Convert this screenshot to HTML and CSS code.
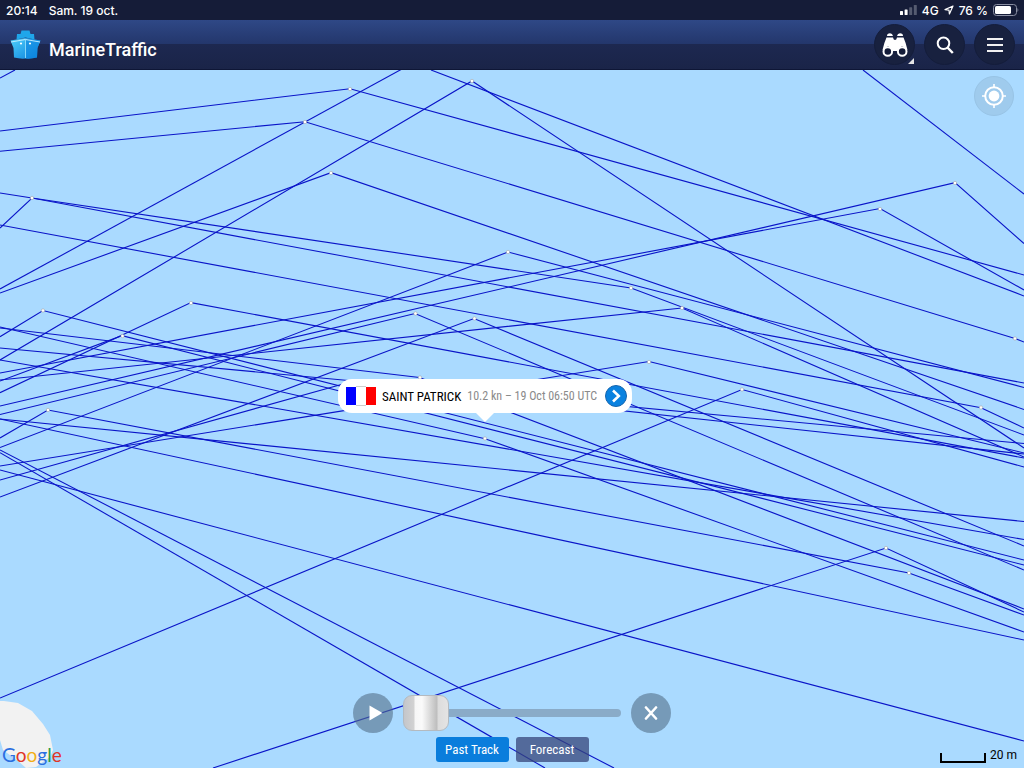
FILE: index.html
```html
<!DOCTYPE html>
<html lang="fr">
  <head>
    <meta charset="UTF-8" />
    <meta name="viewport" content="width=device-width, initial-scale=1.0" />
    <title>MarineTraffic</title>
    <link rel="stylesheet" href="styles.css">
  </head>
  <body>
    <div class="status-bar">
      <span>20:14</span>
      <span>Sam. 19 oct.</span>
      <div class="status-right">
        <svg width="17" height="10" viewBox="0 0 17 10">
          <rect x="0" y="6" width="3" height="4" rx="0.6" fill="#fff" />
          <rect x="4.6" y="4.5" width="3" height="5.5" rx="0.6" fill="#fff" />
          <rect x="9.2" y="2.3" width="3" height="7.7" rx="0.6" fill="#555b70" />
          <rect x="13.8" y="0" width="3" height="10" rx="0.6" fill="#555b70" />
        </svg>
        <span>4G</span>
        <svg width="10" height="10" viewBox="0 0 10 10">
          <path d="M9 1 L1 4.6 L5 5.2 L5.4 9 Z" fill="none" stroke="#fff" stroke-width="1.2" stroke-linejoin="round" />
        </svg>
        <span>76 %</span>
        <svg width="26" height="12" viewBox="0 0 26 12">
          <rect x="0.5" y="0.5" width="23" height="11" rx="3" fill="none" stroke="#8a8fa3" />
          <rect x="2" y="2" width="16" height="8" rx="1.6" fill="#fff" />
          <path d="M24.500 4 q1.600 2 0 4 z" fill="#8a8fa3" />
        </svg>
      </div>
    </div>

    <header class="header">
      <a class="brand" href="#">
        <svg width="32" height="30" viewBox="0 0 32 30">
          <defs>
            <linearGradient id="hull" x1="0" y1="0" x2="1" y2="1">
              <stop offset="0" stop-color="#4fd0fa" />
              <stop offset="1" stop-color="#0a7fdc" />
            </linearGradient>
          </defs>
          <path d="M12.500 0.500 H20.500 L21.500 4 H25 L25.500 9.500 L16.500 7.500 L7.500 9.500 L8 4 H11.500 Z" fill="#1fa6ea" />
          <path d="M1.500 10.500 L16.500 8 L31.500 10.500 L28.500 18 L28 27.500 Q22 29 16.500 28.500 Q11 29 5 27.500 L4.500 18 Z" fill="url(#hull)" />
          <path d="M16.500 8 L31.500 10.500 L28.500 18 L28 27.500 Q22 29 16.500 28.500 Z" fill="#0c86df" opacity="0.6" />
          <path d="M2 12 L16.500 9.500 L31 12" fill="none" stroke="#c8f1ff" stroke-width="0.9" />
          <path d="M16.500 10 V28" stroke="#9fe6fc" stroke-width="0.8" />
          <circle cx="12" cy="13.500" r="1.100" fill="#fff" />
          <circle cx="21" cy="13.500" r="1.100" fill="#fff" />
        </svg>
        <span>MarineTraffic</span>
      </a>
      <nav class="nav">
        <button class="round has-more" aria-label="Vessels">
          <svg width="26" height="24" viewBox="0 0 26 24" fill="#fff">
            <path d="M5 3 Q5 0.300 8 0.300 Q10.500 0.300 11 3 Z M15 3 Q15.500 0.300 18 0.300 Q21 0.300 21 3 Z" />
            <path d="M4.500 4.500 H11 Q11.500 7 13 7 Q14.500 7 15 4.500 H21.500 Q24 10 25.500 17 L20 13 L16 17 H10 L6 13 L0.500 17 Q2 10 4.500 4.500 Z" />
            <path d="M10 12 H16 V18 H10 Z" />
            <circle cx="5.800" cy="18.500" r="4.300" fill="#141c38" stroke="#fff" stroke-width="2" />
            <circle cx="20.200" cy="18.500" r="4.300" fill="#141c38" stroke="#fff" stroke-width="2" />
          </svg>
        </button>
        <button class="round" aria-label="Search">
          <svg width="18" height="18" viewBox="0 0 18 18" fill="none" stroke="#fff" stroke-width="2">
            <circle cx="7.500" cy="7.300" r="5.800" />
            <path d="M11.500 11.500 L16.800 17" stroke-width="2.500" />
          </svg>
        </button>
        <button class="round" aria-label="Menu">
          <svg width="16" height="14" viewBox="0 0 16 14" fill="#f1f1f1">
            <rect y="0" width="16" height="2" />
            <rect y="6" width="16" height="2" />
            <rect y="12" width="16" height="2" />
          </svg>
        </button>
      </nav>
    </header>

    <main class="map">
      <svg class="tracks" viewBox="0 70 1024 698" preserveAspectRatio="xMidYMid slice">
        <path class="land" d="M0 701 H4 L18 703 L32 711 L43 724 L50 735 L53 750 L50 757 L36 767 L26 768 L18 761 L3 750 L0 740 Z" />
        <g class="lines">
          <path d="M0 78 L15 70" />
          <path d="M0 131 L350 88.700 L1024 275" />
          <path d="M0 151.300 L305 121.700 L1015 338.500 L1024 342" />
          <path d="M0 289 L402 69" />
          <path d="M431 70 L1024 296" />
          <path d="M863 70 L1024 194" />
          <path d="M0 360 L472 81 L1024 448" />
          <path d="M0 293 L331 172.700 L1024 409.500" />
          <path d="M0 193 L32 198 L631 288 L1024 435" />
          <path d="M0 228 L32 198 L340 255.500 L1024 383" />
          <path d="M0 225 L981 407.700 L1024 428" />
          <path d="M0 447.500 L508 252 L1024 387.500" />
          <path d="M0 373 L880 208.500 L1024 290" />
          <path d="M0 406 L955 182.700 L1024 243.500" />
          <path d="M0 414.500 L415 313.500 L1024 570" />
          <path d="M0 497 L474 318.500 L1024 546" />
          <path d="M0 380 L682 308 L1024 457" />
          <path d="M0 336.700 L43 310.500 L1024 560" />
          <path d="M0 392.700 L191 302.600 L1024 458" />
          <path d="M0 381 L122 335.700 L1024 565" />
          <path d="M0 328 L419.500 377.500 L1024 609" />
          <path d="M0 327 L485 438.700 L1024 632" />
          <path d="M0 348 L1024 443.500" />
          <path d="M0 360 L1024 539.500" />
          <path d="M0 466 L649 361.500 L1024 453" />
          <path d="M0 480 L352 381.500 L1024 454" />
          <path d="M0 438 L48 410 L909 573 L1024 615" />
          <path d="M0 419 L1024 521.500" />
          <path d="M0 419 L1024 640" />
          <path d="M0 470 L1024 741" />
          <path d="M0 452.700 L545 768" />
          <path d="M0 450 L614 768" />
          <path d="M0 698 L742 389.500 L1024 467" />
          <path d="M213 768 L886 548 L1024 612" />
        </g>
        <g class="points">
          <circle cx="350" cy="89" r="1.700" />
          <circle cx="305" cy="122" r="1.700" />
          <circle cx="472" cy="81" r="1.700" />
          <circle cx="331" cy="173" r="1.700" />
          <circle cx="32" cy="198" r="1.700" />
          <circle cx="508" cy="252" r="1.700" />
          <circle cx="631" cy="288" r="1.700" />
          <circle cx="880" cy="209" r="1.700" />
          <circle cx="955" cy="183" r="1.700" />
          <circle cx="1015" cy="338.500" r="1.700" />
          <circle cx="43" cy="310.500" r="1.700" />
          <circle cx="191" cy="303" r="1.700" />
          <circle cx="122.500" cy="336" r="1.700" />
          <circle cx="48" cy="410" r="1.700" />
          <circle cx="415.500" cy="313.500" r="1.700" />
          <circle cx="474.500" cy="318.500" r="1.700" />
          <circle cx="682" cy="308" r="1.700" />
          <circle cx="420" cy="377.500" r="1.700" />
          <circle cx="649" cy="362" r="1.700" />
          <circle cx="742" cy="389.500" r="1.700" />
          <circle cx="981" cy="407.500" r="1.700" />
          <circle cx="485" cy="438.500" r="1.700" />
          <circle cx="886" cy="548" r="1.700" />
          <circle cx="909" cy="573" r="1.700" />
        </g>
      </svg>

      <button class="locate" aria-label="My location">
        <svg width="24" height="24" viewBox="0 0 24 24">
          <circle cx="12" cy="12" r="8.800" fill="none" stroke="#fff" stroke-width="2" />
          <circle cx="12" cy="12" r="5.400" fill="#fff" />
          <path d="M12 0 V4 M12 20 V24 M0 12 H4 M20 12 H24" stroke="#fff" stroke-width="1.600" />
        </svg>
      </button>

      <div class="callout">
        <svg class="flag" width="30" height="20" viewBox="0 0 30 20">
          <rect width="30" height="20" fill="#fff" />
          <rect y="1" width="10" height="18" fill="#00f" />
          <rect x="20" y="1" width="10" height="18" fill="#f00" />
          <path d="M10 0.500 H20 M10 19.500 H20" stroke="#ccc" />
        </svg>
        <span class="ship">SAINT PATRICK</span>
        <span class="info">10.2 kn – 19 Oct 06:50 UTC</span>
        <button class="go" aria-label="Details">
          <svg width="12" height="14" viewBox="0 0 12 14" fill="none" stroke="#fff" stroke-width="2.600">
            <path d="M3 1.500 L8.800 7 L3 12.500" />
          </svg>
        </button>
      </div>

      <div class="playback">
        <div class="timeline">
          <button class="control" aria-label="Play">
            <svg class="play" width="14" height="16" viewBox="0 0 14 16"><path d="M0.500 0.500 L13.500 8 L0.500 15.500 Z" fill="#fff" /></svg>
          </button>
          <input class="slider" type="range" min="0" max="100" value="0" aria-label="Time" />
          <button class="control" aria-label="Close">
            <svg width="14" height="14" viewBox="0 0 14 14"><path d="M2 1.500 L12 12.500 M12 1.500 L2 12.500" stroke="#fff" stroke-width="2.600" stroke-linecap="round" /></svg>
          </button>
        </div>
        <div class="tabs">
          <button class="tab active">Past Track</button>
          <button class="tab">Forecast</button>
        </div>
      </div>

      <a class="google" href="#"><span class="blue">G</span><span class="red">o</span><span class="yellow">o</span><span class="blue">g</span><span class="green">l</span><span class="red">e</span></a>

      <div class="scale">
        <div class="scale-bar"></div>
        <span>20 m</span>
      </div>
    </main>
  </body>
</html>
```
FILE: styles.css
```css
* {
  box-sizing: border-box;
}
body {
  display: flex;
  flex-direction: column;
  min-height: 100vh;
  margin: 0;
  background-color: #aadaff;
  font-family: Roboto, "Liberation Sans", sans-serif;
}
button {
  display: flex;
  align-items: center;
  justify-content: center;
  padding: 0;
  border: none;
  font-family: inherit;
  cursor: pointer;
}
a {
  text-decoration: none;
}
svg {
  flex: none;
}
.status-bar {
  display: flex;
  align-items: center;
  gap: 11px;
  height: 20px;
  padding: 0 5px 0 6px;
  background-color: #151c38;
  color: #fff;
  font-family: Inter, sans-serif;
  font-size: 12px;
  font-weight: 500;
}
.status-right {
  display: flex;
  align-items: center;
  gap: 5px;
  margin-left: auto;
}
.header {
  display: flex;
  align-items: center;
  justify-content: space-between;
  height: 50px;
  padding: 0 9px;
  background: linear-gradient(#2f4886, #23366b 50%, #1d2850 50%, #1a2448);
  border-bottom: 1px solid #0e1636;
}
.brand {
  display: flex;
  align-items: center;
  gap: 8px;
  color: #fff;
  font-size: 18px;
  font-weight: 500;
}
.brand span {
  padding-top: 10px;
}
.nav {
  display: flex;
  gap: 9px;
}
.round {
  position: relative;
  width: 41px;
  height: 41px;
  border: 1px solid #141d3b;
  border-radius: 50%;
  background-color: #18213f;
}
.has-more::after {
  content: "";
  position: absolute;
  right: 0;
  bottom: 0;
  border-left: 6px solid transparent;
  border-bottom: 6px solid #e4e4e4;
}
.map {
  position: relative;
  flex: 1;
  overflow: hidden;
}
.tracks {
  position: absolute;
  width: 100%;
  height: 100%;
}
.land {
  fill: #f2f2f2;
}
.lines {
  fill: none;
  stroke: #0a14c8;
  stroke-width: 1.1px;
}
.points {
  fill: #fff;
  stroke: #999;
  stroke-width: 0.5px;
}
.locate {
  position: absolute;
  top: 6px;
  right: 10px;
  width: 40px;
  height: 40px;
  border: 1px solid #98c4e6;
  border-radius: 50%;
  background-color: #9fcbed;
}
.callout {
  position: absolute;
  top: 309px;
  left: 338px;
  display: flex;
  align-items: center;
  gap: 6px;
  width: 294px;
  height: 34px;
  padding: 0 5px 0 8px;
  border-radius: 14px;
  background-color: #fff;
  font-family: "Roboto Condensed", "Liberation Sans Narrow", "Liberation Sans", sans-serif;
  font-size: 13px;
  white-space: nowrap;
}
.callout::after {
  content: "";
  position: absolute;
  top: 100%;
  left: 50%;
  margin-left: -9px;
  border: 9px solid transparent;
  border-top-color: #fff;
  border-bottom: none;
}
.ship {
  color: #000;
}
.info {
  color: #8a8a8a;
  font-size: 12px;
}
.go {
  flex: none;
  width: 22px;
  height: 22px;
  margin-left: auto;
  border: 1px solid #1565ae;
  border-radius: 50%;
  background-color: #0a82e0;
}
.playback {
  position: absolute;
  left: 0;
  right: 0;
  bottom: 6px;
  display: flex;
  flex-direction: column;
  align-items: center;
  gap: 4px;
}
.timeline {
  display: flex;
  align-items: center;
  gap: 10px;
  width: 318px;
}
.control {
  flex: none;
  width: 40px;
  height: 40px;
  border-radius: 50%;
  background-color: rgba(84, 112, 136, 0.6);
}
.play {
  margin-left: 5px;
}
.slider {
  flex: 1;
  min-width: 0;
  height: 36px;
  margin: 0;
  appearance: none;
  background: none;
}
.slider::-webkit-slider-runnable-track {
  height: 8px;
  border-radius: 4px;
  background-color: #8aabc8;
}
.slider::-webkit-slider-thumb {
  appearance: none;
  width: 46px;
  height: 36px;
  margin-top: -14px;
  border: 1px solid #b4bac0;
  border-radius: 9px;
  background: linear-gradient(
    90deg,
    #c4c6ca 0,
    #d2d2d2 10px,
    #f6f6f6 11px,
    #fafafa 18px,
    #bdbdbd 33px,
    #dcdcdc 34px,
    #e4e4e4 100%
  );
}
.tabs {
  display: flex;
  gap: 7px;
}
.tab {
  width: 73px;
  height: 25px;
  border-radius: 3px;
  background-color: rgba(54, 68, 122, 0.75);
  color: #fff;
  font-family: "Roboto Condensed", "Liberation Sans Narrow", "Liberation Sans", sans-serif;
  font-size: 13px;
}
.tab.active {
  background-color: #0a7ddc;
}
.google {
  position: absolute;
  left: 2px;
  bottom: 1px;
  font-family: Lato, sans-serif;
  font-size: 19px;
  line-height: 24px;
}
.blue {
  color: #2a6ee0;
}
.red {
  color: #e03428;
}
.yellow {
  color: #f2ae18;
}
.green {
  color: #2c9b46;
}
.scale {
  position: absolute;
  right: 7px;
  bottom: 5px;
  display: flex;
  align-items: center;
  gap: 4px;
  font-size: 12px;
  line-height: 16px;
}
.scale-bar {
  width: 46px;
  height: 10px;
  margin-top: 6px;
  border: 2px solid #000;
  border-top: none;
}
```
